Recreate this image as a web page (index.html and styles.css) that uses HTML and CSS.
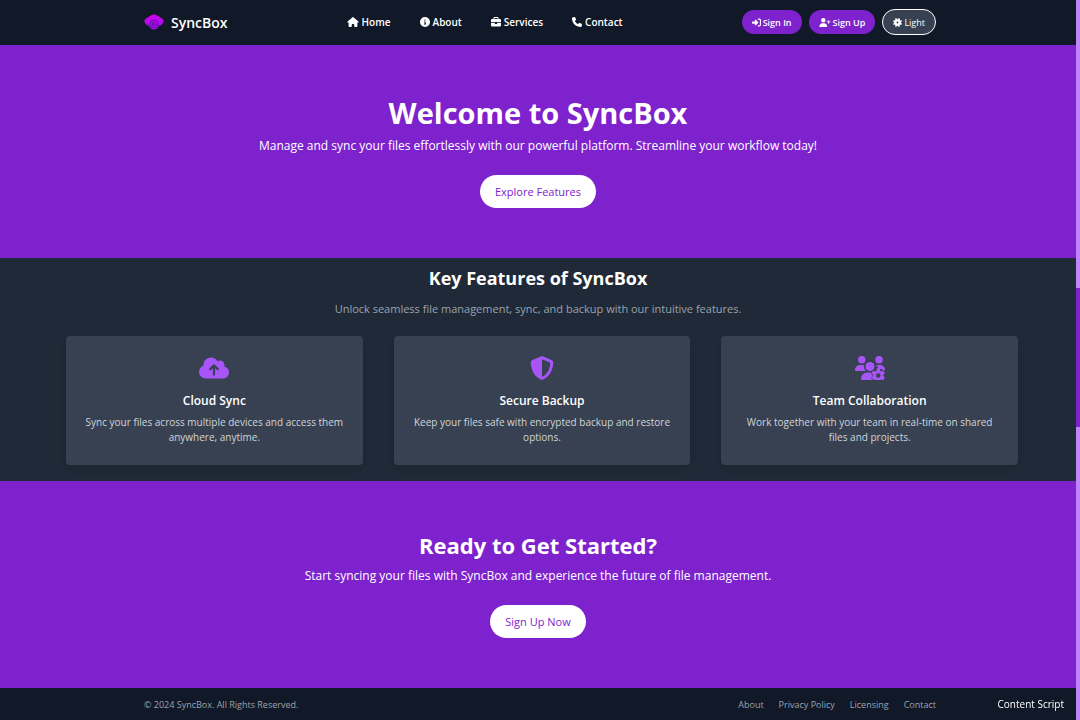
FILE: index.html
```html
<!DOCTYPE html>
<html lang="en">
<head>
    <meta charset="UTF-8">
    <meta name="viewport" content="width=device-width, initial-scale=1.0">
    <title>SyncBox</title>
    <link rel="stylesheet" href="styles.css">
</head>
<body>
    <!-- Header -->
    <header class="header">
        <div class="container">
            <a href="#" class="logo">
                <svg class="logo-icon" viewBox="0 0 20 16" aria-hidden="true">
                    <defs>
                        <linearGradient id="logo-fill" x1="0" y1="0" x2="0" y2="1">
                            <stop offset="0" stop-color="#d400f5"/>
                            <stop offset="1" stop-color="#9a14ea"/>
                        </linearGradient>
                    </defs>
                    <path fill="url(#logo-fill)" d="M10 .5c.8 0 1.500.2 2.300.6l6 3.700c1.500 1.100 1.700 2.800.7 4.100l-1.500 1.800c-.6.7-1.400.8-2.500.8-.6 2.400-2.500 4-5 4s-4.400-1.600-5-4c-1.100 0-1.900-.1-2.500-.8L1 8.900c-1-1.300-.8-3 .7-4.100l6-3.700C8.500.7 9.200.5 10 .5z"/>
                    <circle cx="10" cy="10" r="4" fill="none" stroke="#5b0a9e" stroke-width="1"/>
                    <circle cx="10" cy="10" r="1.600" fill="none" stroke="#5b0a9e" stroke-width="1"/>
                </svg>
                <span>SyncBox</span>
            </a>

            <nav class="nav">
                <a href="#">
                    <svg class="icon icon-wide" viewBox="0 0 576 512" aria-hidden="true"><path d="M575.8 255.5c0 18-15 32.1-32 32.1h-32l.7 160.2c0 2.7-.2 5.4-.5 8.1V472c0 22.1-17.9 40-40 40H392c-22.1 0-40-17.9-40-40V384c0-17.7-14.3-32-32-32H256c-17.7 0-32 14.3-32 32v88c0 22.1-17.9 40-40 40H104c-22.1 0-40-17.9-40-40V287.6H32c-18 0-32-14-32-32.1c0-9 3-17 10-24L266.4 8c7-7 15-8 22-8s15 2 21 7L564.8 231.5c8 7 12 15 11 24z"/></svg>
                    Home
                </a>
                <a href="#">
                    <svg class="icon" viewBox="0 0 512 512" aria-hidden="true"><path d="M256 512A256 256 0 1 0 256 0a256 256 0 1 0 0 512zM216 336h24V272H216c-13.3 0-24-10.7-24-24s10.7-24 24-24h48c13.3 0 24 10.7 24 24v88h8c13.3 0 24 10.7 24 24s-10.7 24-24 24H216c-13.3 0-24-10.7-24-24s10.7-24 24-24zm40-208a32 32 0 1 1 0 64 32 32 0 1 1 0-64z"/></svg>
                    About
                </a>
                <a href="#">
                    <svg class="icon" viewBox="0 0 512 512" aria-hidden="true"><path d="M184 48H328c4.4 0 8 3.6 8 8V96H176V56c0-4.4 3.6-8 8-8zm-56 8V96H64C28.7 96 0 124.700 0 160v96H512V160c0-35.300-28.700-64-64-64H384V56c0-30.900-25.100-56-56-56H184c-30.900 0-56 25.100-56 56zM512 288H320v32c0 17.700-14.300 32-32 32H224c-17.700 0-32-14.300-32-32V288H0V416c0 35.300 28.700 64 64 64H448c35.300 0 64-28.700 64-64V288z"/></svg>
                    Services
                </a>
                <a href="#">
                    <svg class="icon" viewBox="0 0 512 512" aria-hidden="true"><path d="M164.9 24.6c-7.7-18.6-28-28.5-47.4-23.2l-88 24C12.1 30.2 0 46 0 64C0 311.4 200.6 512 448 512c18 0 33.8-12.1 38.600-29.500l24-88c5.300-19.400-4.600-39.700-23.200-47.400l-96-40c-16.300-6.800-35.200-2.100-46.300 11.600L304.700 368C234.300 334.700 177.300 277.700 144 207.300L193.300 167c13.700-11.200 18.400-30 11.600-46.300l-40-96z"/></svg>
                    Contact
                </a>
            </nav>

            <div class="actions">
                <button type="button" class="btn-small">
                    <svg class="icon-small" viewBox="0 0 512 512" aria-hidden="true"><path d="M217.900 105.900L340.700 228.700c7.200 7.200 11.300 17.100 11.300 27.300s-4.100 20.100-11.300 27.300L217.900 406.100c-6.400 6.400-15 9.900-24 9.900c-18.700 0-33.900-15.200-33.900-33.900V320H32c-17.700 0-32-14.300-32-32v-64c0-17.700 14.300-32 32-32h128v-62.100c0-18.700 15.200-33.900 33.900-33.900c9 0 17.600 3.600 24 9.900zM352 416h64c17.700 0 32-14.300 32-32V128c0-17.700-14.300-32-32-32h-64c-17.700 0-32-14.300-32-32s14.300-32 32-32h64c53 0 96 43 96 96v256c0 53-43 96-96 96h-64c-17.700 0-32-14.300-32-32s14.300-32 32-32z"/></svg>
                    Sign In
                </button>
                <button type="button" class="btn-small">
                    <svg class="icon-small icon-small-wide" viewBox="0 0 640 512" aria-hidden="true"><path d="M96 128a128 128 0 1 1 256 0A128 128 0 1 1 96 128zM0 482.300C0 383.800 79.800 304 178.300 304h91.400C368.200 304 448 383.800 448 482.300c0 16.400-13.300 29.700-29.700 29.700H29.700C13.300 512 0 498.700 0 482.300zM504 312V248H440c-13.300 0-24-10.700-24-24s10.700-24 24-24h64V136c0-13.300 10.700-24 24-24s24 10.700 24 24v64h64c13.300 0 24 10.700 24 24s-10.700 24-24 24H552v64c0 13.300-10.700 24-24 24s-24-10.700-24-24z"/></svg>
                    Sign Up
                </button>
                <button type="button" class="btn-small btn-theme">
                    <svg class="icon-small" viewBox="0 0 512 512" aria-hidden="true"><path fill-rule="evenodd" d="M361.500 1.200c5 2.100 8.600 6.600 9.600 11.900L391 121l107.900 19.800c5.300 1 9.800 4.600 11.900 9.600s1.500 10.700-1.600 15.200L446.900 256l62.300 90.300c3.100 4.500 3.700 10.200 1.600 15.200s-6.600 8.600-11.900 9.600L391 391 371.100 498.900c-1 5.300-4.600 9.800-9.600 11.900s-10.700 1.500-15.200-1.600L256 446.900l-90.300 62.300c-4.500 3.100-10.200 3.700-15.200 1.600s-8.600-6.600-9.600-11.900L121 391 13.100 371.100c-5.300-1-9.800-4.600-11.900-9.600s-1.500-10.700 1.600-15.200L65.100 256 2.800 165.700c-3.100-4.500-3.700-10.200-1.600-15.200s6.600-8.600 11.900-9.600L121 121 140.900 13.100c1-5.300 4.600-9.800 9.600-11.900s10.700-1.500 15.200 1.600L256 65.100 346.300 2.800c4.500-3.100 10.200-3.700 15.200-1.600zM200 256a56 56 0 1 0 112 0 56 56 0 1 0-112 0z"/></svg>
                    Light
                </button>
            </div>
        </div>
    </header>

    <main>
        <!-- Hero -->
        <section class="hero">
            <h1>Welcome to SyncBox</h1>
            <p>Manage and sync your files effortlessly with our powerful platform. Streamline your workflow today!</p>
            <a href="#features" class="btn">Explore Features</a>
        </section>

        <!-- Features -->
        <section class="features" id="features">
            <h2>Key Features of SyncBox</h2>
            <p class="subtitle">Unlock seamless file management, sync, and backup with our intuitive features.</p>
            <div class="cards">
                <div class="card">
                    <svg class="card-icon" viewBox="0 0 640 512" aria-hidden="true"><path d="M144 480C64.500 480 0 415.500 0 336c0-62.800 40.200-116.200 96.200-135.900c-.1-2.700-.2-5.400-.2-8.100c0-88.400 71.600-160 160-160c59.300 0 111 32.200 138.700 80.200C409.900 102 428.300 96 448 96c53 0 96 43 96 96c0 12.200-2.300 23.800-6.400 34.600C596 238.400 640 290.100 640 352c0 70.700-57.300 128-128 128H144zm79-217c-9.400 9.400-9.400 24.600 0 33.900s24.600 9.400 33.900 0l39-39V392c0 13.300 10.700 24 24 24s24-10.700 24-24V257.900l39 39c9.400 9.400 24.600 9.400 33.900 0s9.400-24.600 0-33.900l-80-80c-9.400-9.400-24.600-9.400-33.900 0l-80 80z"/></svg>
                    <h3>Cloud Sync</h3>
                    <p>Sync your files across multiple devices and access them anywhere, anytime.</p>
                </div>
                <div class="card">
                    <svg class="card-icon" viewBox="0 0 512 512" aria-hidden="true"><path fill-rule="evenodd" d="M256 0c4.600 0 9.200 1 13.400 2.900L457.700 82.800c22 9.300 38.400 31 38.300 57.200c-.5 99.200-41.300 280.700-213.600 363.200c-16.700 8-36.100 8-52.800 0C57.300 420.700 16.500 239.200 16 140c-.1-26.200 16.300-47.900 38.300-57.200L242.700 2.900C246.800 1 251.400 0 256 0zM256 66.800V444.800C394 378 431.100 230.100 432 141.400L256 66.800z"/></svg>
                    <h3>Secure Backup</h3>
                    <p>Keep your files safe with encrypted backup and restore options.</p>
                </div>
                <div class="card">
                    <svg class="card-icon" viewBox="0 0 640 512" aria-hidden="true">
                        <circle cx="144" cy="80" r="80"/>
                        <circle cx="512" cy="80" r="80"/>
                        <circle cx="320" cy="224" r="96"/>
                        <path d="M0 298.700C0 239.800 47.800 192 106.700 192h42.700c15.900 0 31 3.500 44.600 9.700c-1.300 7.200-1.900 14.700-1.900 22.300c0 38.200 16.800 72.500 43.300 96H21.300C9.600 320 0 310.400 0 298.700z"/>
                        <path d="M448 224c0-8-.7-15-2-22c14-6 29-10 45-10h42.700c58.900 0 106.300 47.800 106.300 106.700c0 5-2 9-5 13l-30-17-24 10-12-26h-82l-10 20-10-12c10-18 26-32 26-62.700z"/>
                        <path d="M261.300 352h92l-8 24 27 32v28l-27 27 20 49H154.700c-14.700 0-26.700-11.900-26.700-26.700C128 411.700 187.700 352 261.300 352z"/>
                        <path fill-rule="evenodd" d="M466 268h60l10 44 26 16 43-13 32 54-33 31v28l33 31-32 54-43-13-26 16-10 44h-60l-10-44-26-16-43 13-32-54 33-31v-28l-33-31 32-54 43 13 26-16zM496 366a48 48 0 1 0 0 96 48 48 0 1 0 0-96z"/>
                    </svg>
                    <h3>Team Collaboration</h3>
                    <p>Work together with your team in real-time on shared files and projects.</p>
                </div>
            </div>
        </section>

        <!-- Call to action -->
        <section class="hero cta">
            <h2>Ready to Get Started?</h2>
            <p>Start syncing your files with SyncBox and experience the future of file management.</p>
            <a href="#" class="btn">Sign Up Now</a>
        </section>
    </main>

    <!-- Footer -->
    <footer class="footer">
        <div class="container">
            <p>© 2024 SyncBox. All Rights Reserved.</p>
            <nav class="footer-nav">
                <a href="#">About</a>
                <a href="#">Privacy Policy</a>
                <a href="#">Licensing</a>
                <a href="#">Contact</a>
            </nav>
        </div>
    </footer>

    <div class="badge">Content Script</div>
    <div class="scroll-track"><div class="scroll-thumb"></div></div>
</body>
</html>
```
FILE: styles.css
```css
* {
    box-sizing: border-box;
    margin: 0;
    padding: 0;
}
body {
    min-height: 100vh;
    padding-right: 4px;
    font-family: "Open Sans", "Noto Sans", sans-serif;
    color: #fff;
    background-color: #111827;
}
a {
    color: inherit;
    text-decoration: none;
}
svg {
    fill: currentColor;
    flex-shrink: 0;
}
.container {
    display: flex;
    align-items: center;
    justify-content: space-between;
    max-width: 796px;
    margin: 0 auto;
    padding-left: 4px;
}

/* Header */
.header {
    padding: 9px 0 10px;
    background-color: #111827;
}
.logo {
    display: flex;
    align-items: center;
    gap: 7px;
    font-size: 14px;
    font-weight: 600;
}
.logo-icon {
    width: 20px;
    height: 16px;
}
.nav {
    display: flex;
    gap: 29px;
    font-size: 10px;
    font-weight: 600;
}
.nav a {
    display: flex;
    align-items: center;
    gap: 3px;
}
.icon {
    width: 10px;
    height: 10px;
}
.icon-wide {
    width: 12px;
}
.actions {
    display: flex;
    align-items: center;
    gap: 7px;
}
.btn-small {
    display: flex;
    align-items: center;
    gap: 2px;
    height: 24px;
    padding: 0 10px;
    border: none;
    border-radius: 12px;
    font-family: inherit;
    font-size: 9px;
    font-weight: 600;
    color: #fff;
    background-color: #7e22ce;
    cursor: pointer;
}
.btn-theme {
    height: 26px;
    border: 1px solid #fff;
    border-radius: 13px;
    font-weight: 400;
    background-color: #374151;
}
.icon-small {
    width: 9px;
    height: 9px;
}
.icon-small-wide {
    width: 12px;
}

/* Hero */
.hero {
    padding: 48px 16px 50px;
    text-align: center;
    background-color: #7e22ce;
}
.hero h1 {
    font-size: 29px;
    line-height: 40px;
}
.hero p {
    margin: 4px 0 20px;
    font-size: 12px;
    line-height: 18px;
}
.btn {
    display: block;
    width: fit-content;
    margin: 0 auto;
    padding: 0 15px;
    border-radius: 17px;
    font-size: 11px;
    font-weight: 500;
    line-height: 33px;
    color: #7e22ce;
    background-color: #fff;
}

/* Features */
.features {
    padding: 6px 16px 16px;
    text-align: center;
    background-color: #1f2937;
}
.features h2 {
    font-size: 18px;
    line-height: 28px;
}
.subtitle {
    margin: 8px 0 18px;
    font-size: 11px;
    line-height: 18px;
    color: #9ca3af;
}
.cards {
    display: grid;
    grid-template-columns: repeat(3, 1fr);
    gap: 31px;
    max-width: 960px;
    margin: 0 auto;
    padding-left: 8px;
}
.card {
    padding: 20px 18px;
    border-radius: 4px;
    background-color: #374151;
    box-shadow: 0 4px 8px rgba(0, 0, 0, 0.1);
}
.card-icon {
    display: block;
    height: 24px;
    margin: 0 auto 10px;
    color: #a855f7;
}
.card h3 {
    font-size: 12px;
    font-weight: 600;
    line-height: 21px;
}
.card p {
    margin-top: 4px;
    font-size: 10px;
    line-height: 15px;
    color: #d1d5db;
}

/* Call to action */
.cta h2 {
    font-size: 22px;
    line-height: 32px;
}
.cta p {
    margin-top: 6px;
}

/* Footer */
.footer {
    padding: 9px 0 7px;
    font-size: 9px;
    line-height: 16px;
    color: #9ca3af;
    background-color: #111827;
}
.footer-nav {
    display: flex;
    gap: 15px;
}

/* Overlays */
.badge {
    position: fixed;
    right: 16px;
    bottom: 8px;
    font-size: 10px;
    line-height: 16px;
}
.scroll-track {
    position: fixed;
    top: 0;
    right: 0;
    width: 4px;
    height: 100%;
    padding-top: 288px;
    background-color: #c084fc;
}
.scroll-thumb {
    height: 139px;
    background-color: #7e22ce;
}
```
